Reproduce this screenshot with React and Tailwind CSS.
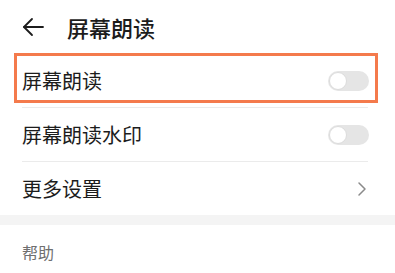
import React from "react";

function Toggle() {
  return (
    <div className="relative h-[20px] w-[41px] rounded-full bg-[#e5e5e5]">
      <div className="absolute left-[1px] top-[1px] h-[18px] w-[18px] rounded-full border border-[#dcdcdc] bg-white" />
    </div>
  );
}

function Row({ label, right, divider = true, highlight = false }) {
  return (
    <div className="relative">
      <div className="flex h-[53px] items-center justify-between pl-[22px] pr-[26px]">
        <span className="text-[20px] leading-none text-[#1c1c1c]">{label}</span>
        {right}
      </div>
      {divider && <div className="mx-[22px] mr-[27px] h-px bg-[#ebebeb]" />}
      {highlight && (
        <div className="absolute left-[14px] right-[17px] top-[-1px] h-[50px] border-[3px] border-[#f47a4c]" />
      )}
    </div>
  );
}

export default function App() {
  return (
    <div
      className="h-[273px] w-[395px] overflow-hidden bg-white"
      style={{ fontFamily: '"Noto Sans CJK SC", "Noto Sans", sans-serif' }}
    >
      <div className="flex h-[54px] items-center pl-[22px]">
        <svg width="22" height="20" viewBox="0 0 22 20" fill="none" stroke="#1c1c1c" strokeWidth="1.8" strokeLinecap="round" strokeLinejoin="round">
          <path d="M2 10h19" />
          <path d="M10 2L2 10l8 8" />
        </svg>
        <span className="ml-[23px] text-[22px] font-medium leading-none text-[#1c1c1c]">屏幕朗读</span>
      </div>

      <Row label="屏幕朗读" right={<Toggle />} highlight />
      <Row label="屏幕朗读水印" right={<Toggle />} />
      <Row
        label="更多设置"
        divider={false}
        right={
          <svg width="10" height="16" viewBox="0 0 10 16" fill="none" stroke="#8a8a8a" strokeWidth="1.5" strokeLinecap="round" strokeLinejoin="round" className="mr-[2px]">
            <path d="M2 2l6 6-6 6" />
          </svg>
        }
      />

      <div className="h-[10px] bg-[#f4f4f4]" />

      <div className="pl-[22px] pt-[15px]">
        <span className="text-[16px] leading-none text-[#6f6f6f]">帮助</span>
      </div>
    </div>
  );
}
